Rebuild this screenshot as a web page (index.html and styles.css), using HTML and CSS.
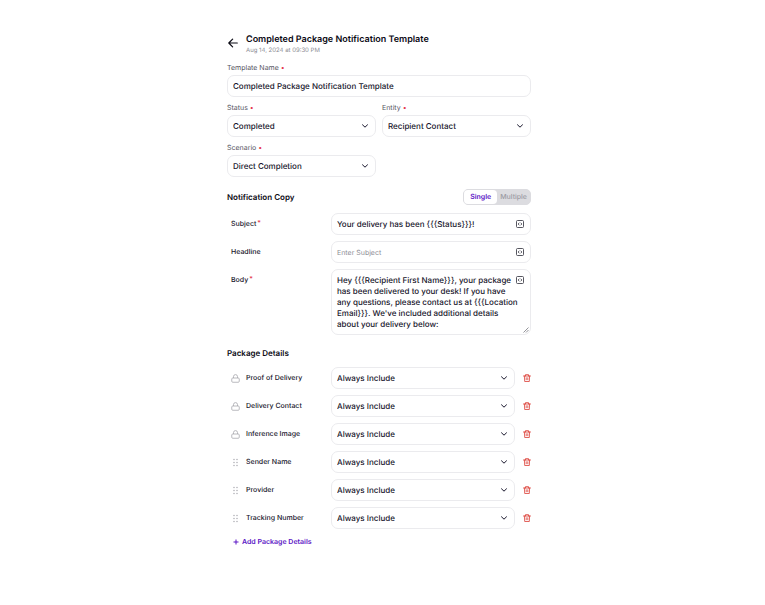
FILE: index.html
```html
<!DOCTYPE html>
<html lang="en">
<head>
    <meta charset="UTF-8">
    <meta name="viewport" content="width=device-width, initial-scale=1.0">
    <title>Completed Package Notification Template</title>
    <link rel="stylesheet" href="styles.css">
</head>
<body>

<!-- Shared icons -->
<svg class="icon-sprite" aria-hidden="true">
    <symbol id="icon-chevron" viewBox="0 0 8 8">
        <path d="M1.5 2.8 4 5.2 6.5 2.8" fill="none" stroke="currentColor" stroke-width="1" stroke-linecap="round" stroke-linejoin="round"/>
    </symbol>
    <symbol id="icon-code" viewBox="0 0 16 16">
        <rect x="1" y="1" width="14" height="14" rx="2" fill="none" stroke="currentColor" stroke-width="1.8"/>
        <path d="M6.8 5.4 4.2 8l2.6 2.6M9.2 5.4 11.8 8l-2.6 2.6" fill="none" stroke="currentColor" stroke-width="1.7"/>
    </symbol>
    <symbol id="icon-lock" viewBox="0 0 18 18">
        <rect x="1.5" y="8" width="15" height="8.5" rx="2" fill="none" stroke="currentColor" stroke-width="1.5"/>
        <path d="M5 8V5.2a4 4 0 0 1 8 0V8" fill="none" stroke="currentColor" stroke-width="1.5"/>
    </symbol>
    <symbol id="icon-grip" viewBox="0 0 18 18">
        <g fill="currentColor">
            <circle cx="6" cy="3" r="1.4"/><circle cx="12" cy="3" r="1.4"/>
            <circle cx="6" cy="9" r="1.4"/><circle cx="12" cy="9" r="1.4"/>
            <circle cx="6" cy="15" r="1.4"/><circle cx="12" cy="15" r="1.4"/>
        </g>
    </symbol>
    <symbol id="icon-trash" viewBox="0 0 16 16">
        <path d="M1 4h14M5 4V1.3h6V4M2.8 4l.6 11h9.2l.6-11M6.4 7.5v4M9.6 7.5v4" fill="none" stroke="currentColor" stroke-width="1.5" stroke-linecap="round" stroke-linejoin="round"/>
    </symbol>
</svg>

<main class="container">
    <header class="page-header">
        <button type="button" class="back-btn" aria-label="Back">
            <svg viewBox="0 0 10 10"><path d="M9.3 5H.9M4.6 1.2.8 5l3.8 3.8" fill="none" stroke="currentColor" stroke-width="1.2" stroke-linecap="round" stroke-linejoin="round"/></svg>
        </button>
        <div>
            <h1>Completed Package Notification Template</h1>
            <p class="date">Aug 14, 2024 at 09:30 PM</p>
        </div>
    </header>

    <form>
        <div class="form-grid">
            <div class="field field-wide">
                <label for="templateName">Template Name <span class="required">•</span></label>
                <input type="text" class="form-input" id="templateName" value="Completed Package Notification Template">
            </div>
            <div class="field">
                <label for="status">Status <span class="required">•</span></label>
                <div class="control">
                    <select class="form-input" id="status"><option>Completed</option></select>
                    <svg class="chevron"><use href="#icon-chevron"/></svg>
                </div>
            </div>
            <div class="field">
                <label for="entity">Entity <span class="required">•</span></label>
                <div class="control">
                    <select class="form-input" id="entity"><option>Recipient Contact</option></select>
                    <svg class="chevron"><use href="#icon-chevron"/></svg>
                </div>
            </div>
            <div class="field">
                <label for="scenario">Scenario <span class="required">•</span></label>
                <div class="control">
                    <select class="form-input" id="scenario"><option>Direct Completion</option></select>
                    <svg class="chevron"><use href="#icon-chevron"/></svg>
                </div>
            </div>
        </div>

        <!-- Notification copy -->
        <section class="section copy-section">
            <div class="section-header">
                <h2>Notification Copy</h2>
                <div class="toggle">
                    <button type="button" class="toggle-btn active">Single</button>
                    <button type="button" class="toggle-btn">Multiple</button>
                </div>
            </div>
            <div class="row">
                <label for="subject">Subject<span class="required star">*</span></label>
                <div class="control">
                    <input type="text" class="form-input" id="subject" value="Your delivery has been {{{Status}}}!">
                    <button type="button" class="code-btn" aria-label="Insert variable"><svg><use href="#icon-code"/></svg></button>
                </div>
            </div>
            <div class="row">
                <label for="headline">Headline</label>
                <div class="control">
                    <input type="text" class="form-input" id="headline" placeholder="Enter Subject">
                    <button type="button" class="code-btn" aria-label="Insert variable"><svg><use href="#icon-code"/></svg></button>
                </div>
            </div>
            <div class="row row-body">
                <label for="body">Body<span class="required star">*</span></label>
                <div class="control">
                    <textarea class="form-input" id="body" rows="5">Hey {{{Recipient First Name}}}, your package has been delivered to your desk! If you have any questions, please contact us at {{{Location Email}}}. We've included additional details about your delivery below:</textarea>
                    <button type="button" class="code-btn" aria-label="Insert variable"><svg><use href="#icon-code"/></svg></button>
                    <svg class="resize" viewBox="0 0 6 6"><path d="M.5 5.5l5-5M3 5.5 5.5 3" stroke="currentColor" stroke-width=".7"/></svg>
                </div>
            </div>
        </section>

        <!-- Package details -->
        <section class="section">
            <div class="section-header">
                <h2>Package Details</h2>
            </div>
            <div class="row">
                <label for="proof"><svg class="row-icon"><use href="#icon-lock"/></svg>Proof of Delivery</label>
                <div class="control">
                    <select class="form-input" id="proof"><option>Always Include</option></select>
                    <svg class="chevron"><use href="#icon-chevron"/></svg>
                </div>
                <button type="button" class="delete-btn" aria-label="Delete Proof of Delivery"><svg><use href="#icon-trash"/></svg></button>
            </div>
            <div class="row">
                <label for="contact"><svg class="row-icon"><use href="#icon-lock"/></svg>Delivery Contact</label>
                <div class="control">
                    <select class="form-input" id="contact"><option>Always Include</option></select>
                    <svg class="chevron"><use href="#icon-chevron"/></svg>
                </div>
                <button type="button" class="delete-btn" aria-label="Delete Delivery Contact"><svg><use href="#icon-trash"/></svg></button>
            </div>
            <div class="row">
                <label for="image"><svg class="row-icon"><use href="#icon-lock"/></svg>Inference Image</label>
                <div class="control">
                    <select class="form-input" id="image"><option>Always Include</option></select>
                    <svg class="chevron"><use href="#icon-chevron"/></svg>
                </div>
                <button type="button" class="delete-btn" aria-label="Delete Inference Image"><svg><use href="#icon-trash"/></svg></button>
            </div>
            <div class="row">
                <label for="sender"><svg class="row-icon"><use href="#icon-grip"/></svg>Sender Name</label>
                <div class="control">
                    <select class="form-input" id="sender"><option>Always Include</option></select>
                    <svg class="chevron"><use href="#icon-chevron"/></svg>
                </div>
                <button type="button" class="delete-btn" aria-label="Delete Sender Name"><svg><use href="#icon-trash"/></svg></button>
            </div>
            <div class="row">
                <label for="provider"><svg class="row-icon"><use href="#icon-grip"/></svg>Provider</label>
                <div class="control">
                    <select class="form-input" id="provider"><option>Always Include</option></select>
                    <svg class="chevron"><use href="#icon-chevron"/></svg>
                </div>
                <button type="button" class="delete-btn" aria-label="Delete Provider"><svg><use href="#icon-trash"/></svg></button>
            </div>
            <div class="row">
                <label for="tracking"><svg class="row-icon"><use href="#icon-grip"/></svg>Tracking Number</label>
                <div class="control">
                    <select class="form-input" id="tracking"><option>Always Include</option></select>
                    <svg class="chevron"><use href="#icon-chevron"/></svg>
                </div>
                <button type="button" class="delete-btn" aria-label="Delete Tracking Number"><svg><use href="#icon-trash"/></svg></button>
            </div>
            <button type="button" class="add-btn">
                <svg viewBox="0 0 6 6"><path d="M3 .5v5M.5 3h5" stroke="currentColor" stroke-width="1"/></svg>
                Add Package Details
            </button>
        </section>
    </form>
</main>

</body>
</html>
```
FILE: styles.css
```css
/* General styles */
* {
    box-sizing: border-box;
}

body {
    font-family: Inter, "Liberation Sans", sans-serif;
    font-size: 7px;
    line-height: 10px;
    text-rendering: geometricPrecision;
    color: #17152b;
    background-color: #fff;
    margin: 0;
    padding: 34px 7px 34px 0;
}

h1, h2, p {
    margin: 0;
}

button {
    display: flex;
    align-items: center;
    justify-content: center;
    font: inherit;
    color: inherit;
    text-rendering: inherit;
    background: none;
    border: none;
    padding: 0;
    cursor: pointer;
}

svg {
    display: block;
}

.icon-sprite {
    display: none;
}

.container {
    max-width: 304px;
    margin: 0 auto;
}

/* Header */
.page-header {
    display: flex;
    align-items: flex-start;
    gap: 8px;
    padding-left: 1px;
}

.back-btn {
    height: 18px;
    color: #0b0a14;
}

.back-btn svg {
    width: 10px;
    height: 10px;
}

h1 {
    font-size: 9px;
    line-height: 12px;
    font-weight: 600;
    color: #0b0a14;
}

.date {
    font-size: 6px;
    color: #8b8b93;
}

/* Form fields */
.form-grid {
    display: grid;
    grid-template-columns: 1fr 1fr;
    gap: 6px;
    margin-top: 7px;
}

.field-wide {
    grid-column: 1 / -1;
}

.field label {
    display: block;
    margin-bottom: 2px;
    color: #55555f;
}

.required {
    color: #e5394f;
}

.form-input {
    display: block;
    width: 100%;
    height: 22px;
    margin: 0;
    padding: 0 5px;
    font-family: inherit;
    font-size: 8px;
    font-weight: 500;
    text-rendering: inherit;
    color: #17152b;
    background-color: #fff;
    border: 1px solid #ebebee;
    border-radius: 7px;
    appearance: none;
    outline: none;
}

.form-input::placeholder {
    font-size: 7px;
    font-weight: 400;
    color: #8e8e96;
}

.control {
    position: relative;
    flex: 1;
    min-width: 0;
}

.chevron {
    position: absolute;
    top: 7px;
    right: 7px;
    width: 8px;
    height: 8px;
    pointer-events: none;
}

.code-btn {
    position: absolute;
    top: 7px;
    right: 7px;
    color: #44444e;
}

.code-btn svg, .delete-btn svg {
    width: 8px;
    height: 8px;
}

textarea.form-input {
    height: auto;
    padding: 5px 12px 4px 5px;
    line-height: 11px;
    resize: none;
    overflow: hidden;
}

.resize {
    position: absolute;
    right: 2px;
    bottom: 2px;
    width: 6px;
    height: 6px;
    color: #66666e;
    pointer-events: none;
}

/* Sections */
.section {
    display: flex;
    flex-direction: column;
    gap: 6px;
    margin-top: 10px;
}

.copy-section {
    margin-top: 12px;
}

.section-header {
    display: flex;
    align-items: center;
    justify-content: space-between;
    height: 16px;
}

.copy-section .section-header {
    margin-bottom: 2px;
}

h2 {
    font-size: 8px;
    font-weight: 600;
    color: #0b0a14;
}

.toggle {
    display: flex;
    height: 16px;
    background-color: #dcdce0;
    border: 1px solid #dcdce0;
    border-radius: 5px;
}

.toggle-btn {
    padding: 0 3px;
    color: #9b9ba3;
    font-weight: 500;
    border-radius: 4px;
}

.toggle-btn.active {
    padding: 0 6px;
    color: #5b14c5;
    font-weight: 600;
    background-color: #fff;
}

.row {
    display: flex;
    align-items: center;
}

.row label {
    display: flex;
    align-items: center;
    flex: 0 0 104px;
    padding-left: 4px;
    font-weight: 500;
}

.row-body {
    align-items: flex-start;
}

.row-body label {
    height: 22px;
}

.star {
    margin-left: 1px;
    padding-bottom: 2px;
}

.row-icon {
    width: 9px;
    height: 9px;
    margin-right: 6px;
    color: #a3a3aa;
}

.delete-btn {
    margin-left: 8px;
    color: #d9342b;
}

.add-btn {
    align-self: flex-start;
    gap: 3px;
    margin: 2px 0 0 6px;
    font-weight: 600;
    color: #5b14c5;
}

.add-btn svg {
    width: 6px;
    height: 6px;
}
```
